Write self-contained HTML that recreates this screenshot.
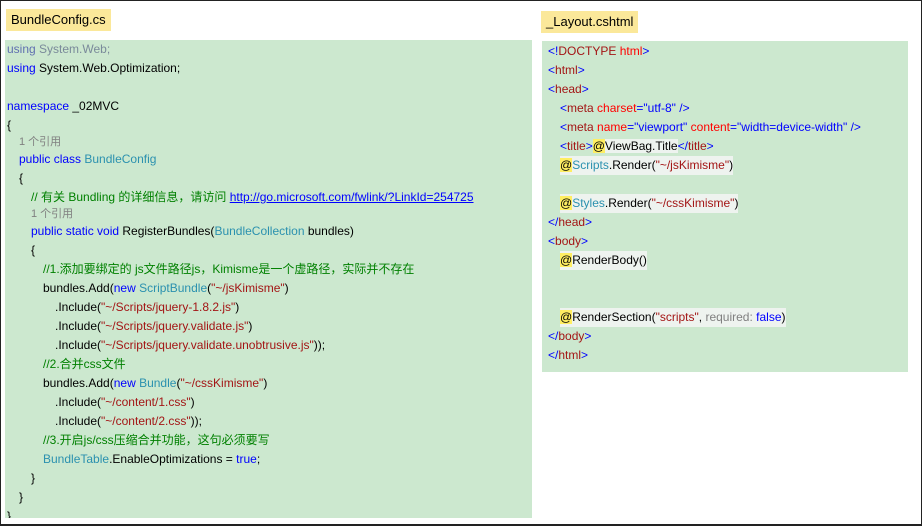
<!DOCTYPE html>
<html><head><meta charset="utf-8"><style>
*{margin:0;padding:0}
body{width:922px;height:526px;background:#fff;position:relative;overflow:hidden;font-family:"Liberation Sans","Noto Sans CJK SC",sans-serif;font-size:12px;color:#000}
.frame{position:absolute;left:0;top:0;width:920px;height:523px;border:1px solid #222;border-bottom:2px solid #222}
.tab{position:absolute;background:#fbe89a;padding:0 5px;height:22px;line-height:22px;font-size:13px}
.panel{position:absolute;background:#cce8cf}
.l{position:absolute;white-space:pre;line-height:19px;height:19px}
.k{color:#0000ff}.t{color:#2b91af}.s{color:#a31515}.c{color:#008000}.g{color:#808080}
.at{background:#ffee62}.a{color:#ff0000}.u{color:#0000ff;text-decoration:underline}
.hl{background:#eef3ef}
</style></head><body>
<div class="frame"></div>
<div class="tab" style="left:6px;top:9px">BundleConfig.cs</div>
<div class="tab" style="left:541px;top:11px">_Layout.cshtml</div>
<div class="panel" style="left:5px;top:40px;width:527px;height:478px"></div>
<div class="panel" style="left:542px;top:41px;width:366px;height:331px"></div>
<div style="position:absolute;left:0;top:2px">
<div class="l" style="left:7px;top:38px;color:#7a8a9a"><span style="color:#6070b0">using</span> System.Web;</div>
<div class="l" style="left:7px;top:57px"><span class="k">using</span> System.Web.Optimization;</div>
<div class="l" style="left:7px;top:95px"><span class="k">namespace</span> _02MVC</div>
<div class="l" style="left:7px;top:114px">{</div>
<div class="l g" style="left:19px;top:131px;font-size:11px">1 个引用</div>
<div class="l" style="left:19px;top:148px"><span class="k">public class</span> <span class="t">BundleConfig</span></div>
<div class="l" style="left:19px;top:167px">{</div>
<div class="l" style="left:31px;top:186px"><span class="c">// 有关 Bundling 的详细信息，请访问 </span><span class="u">http://go.microsoft.com/fwlink/?LinkId=254725</span></div>
<div class="l g" style="left:31px;top:203px;font-size:11px">1 个引用</div>
<div class="l" style="left:31px;top:220px"><span class="k">public static void</span> RegisterBundles(<span class="t">BundleCollection</span> bundles)</div>
<div class="l" style="left:31px;top:239px">{</div>
<div class="l c" style="left:43px;top:258px">//1.添加要绑定的 js文件路径js，Kimisme是一个虚路径，实际并不存在</div>
<div class="l" style="left:43px;top:277px">bundles.Add(<span class="k">new</span> <span class="t">ScriptBundle</span>(<span class="s">"~/jsKimisme"</span>)</div>
<div class="l" style="left:55px;top:296px">.Include(<span class="s">"~/Scripts/jquery-1.8.2.js"</span>)</div>
<div class="l" style="left:55px;top:315px">.Include(<span class="s">"~/Scripts/jquery.validate.js"</span>)</div>
<div class="l" style="left:55px;top:334px">.Include(<span class="s">"~/Scripts/jquery.validate.unobtrusive.js"</span>));</div>
<div class="l c" style="left:43px;top:353px">//2.合并css文件</div>
<div class="l" style="left:43px;top:372px">bundles.Add(<span class="k">new</span> <span class="t">Bundle</span>(<span class="s">"~/cssKimisme"</span>)</div>
<div class="l" style="left:55px;top:391px">.Include(<span class="s">"~/content/1.css"</span>)</div>
<div class="l" style="left:55px;top:410px">.Include(<span class="s">"~/content/2.css"</span>));</div>
<div class="l c" style="left:43px;top:429px">//3.开启js/css压缩合并功能，这句必须要写</div>
<div class="l" style="left:43px;top:448px"><span class="t">BundleTable</span>.EnableOptimizations = <span class="k">true</span>;</div>
<div class="l" style="left:31px;top:467px">}</div>
<div class="l" style="left:19px;top:486px">}</div>
<div class="l" style="left:7px;top:505px;height:11px;overflow:hidden">}</div>

<div class="l" style="left:548px;top:40px"><span class="k">&lt;!</span><span class="s">DOCTYPE</span> <span class="a">html</span><span class="k">&gt;</span></div>
<div class="l" style="left:548px;top:59px"><span class="k">&lt;</span><span class="s">html</span><span class="k">&gt;</span></div>
<div class="l" style="left:548px;top:78px"><span class="k">&lt;</span><span class="s">head</span><span class="k">&gt;</span></div>
<div class="l" style="left:560px;top:97px"><span class="k">&lt;</span><span class="s">meta</span> <span class="a">charset</span><span class="k">="utf-8" /&gt;</span></div>
<div class="l" style="left:560px;top:116px"><span class="k">&lt;</span><span class="s">meta</span> <span class="a">name</span><span class="k">="viewport"</span> <span class="a">content</span><span class="k">="width=device-width" /&gt;</span></div>
<div class="l" style="left:560px;top:135px"><span class="k">&lt;</span><span class="s">title</span><span class="k">&gt;</span><span class="hl"><span class="at">@</span>ViewBag.Title</span><span class="k">&lt;/</span><span class="s">title</span><span class="k">&gt;</span></div>
<div class="l hl" style="left:560px;top:154px"><span class="at">@</span><span class="t">Scripts</span>.Render(<span class="s">"~/jsKimisme"</span>)</div>
<div class="l hl" style="left:560px;top:192px"><span class="at">@</span><span class="t">Styles</span>.Render(<span class="s">"~/cssKimisme"</span>)</div>
<div class="l" style="left:548px;top:211px"><span class="k">&lt;/</span><span class="s">head</span><span class="k">&gt;</span></div>
<div class="l" style="left:548px;top:230px"><span class="k">&lt;</span><span class="s">body</span><span class="k">&gt;</span></div>
<div class="l hl" style="left:560px;top:249px"><span class="at">@</span>RenderBody()</div>
<div class="l hl" style="left:560px;top:306px"><span class="at">@</span>RenderSection(<span class="s">"scripts"</span>, <span class="g">required:</span> <span class="k">false</span>)</div>
<div class="l" style="left:548px;top:325px"><span class="k">&lt;/</span><span class="s">body</span><span class="k">&gt;</span></div>
<div class="l" style="left:548px;top:344px"><span class="k">&lt;/</span><span class="s">html</span><span class="k">&gt;</span></div>
</div>
</body></html>
